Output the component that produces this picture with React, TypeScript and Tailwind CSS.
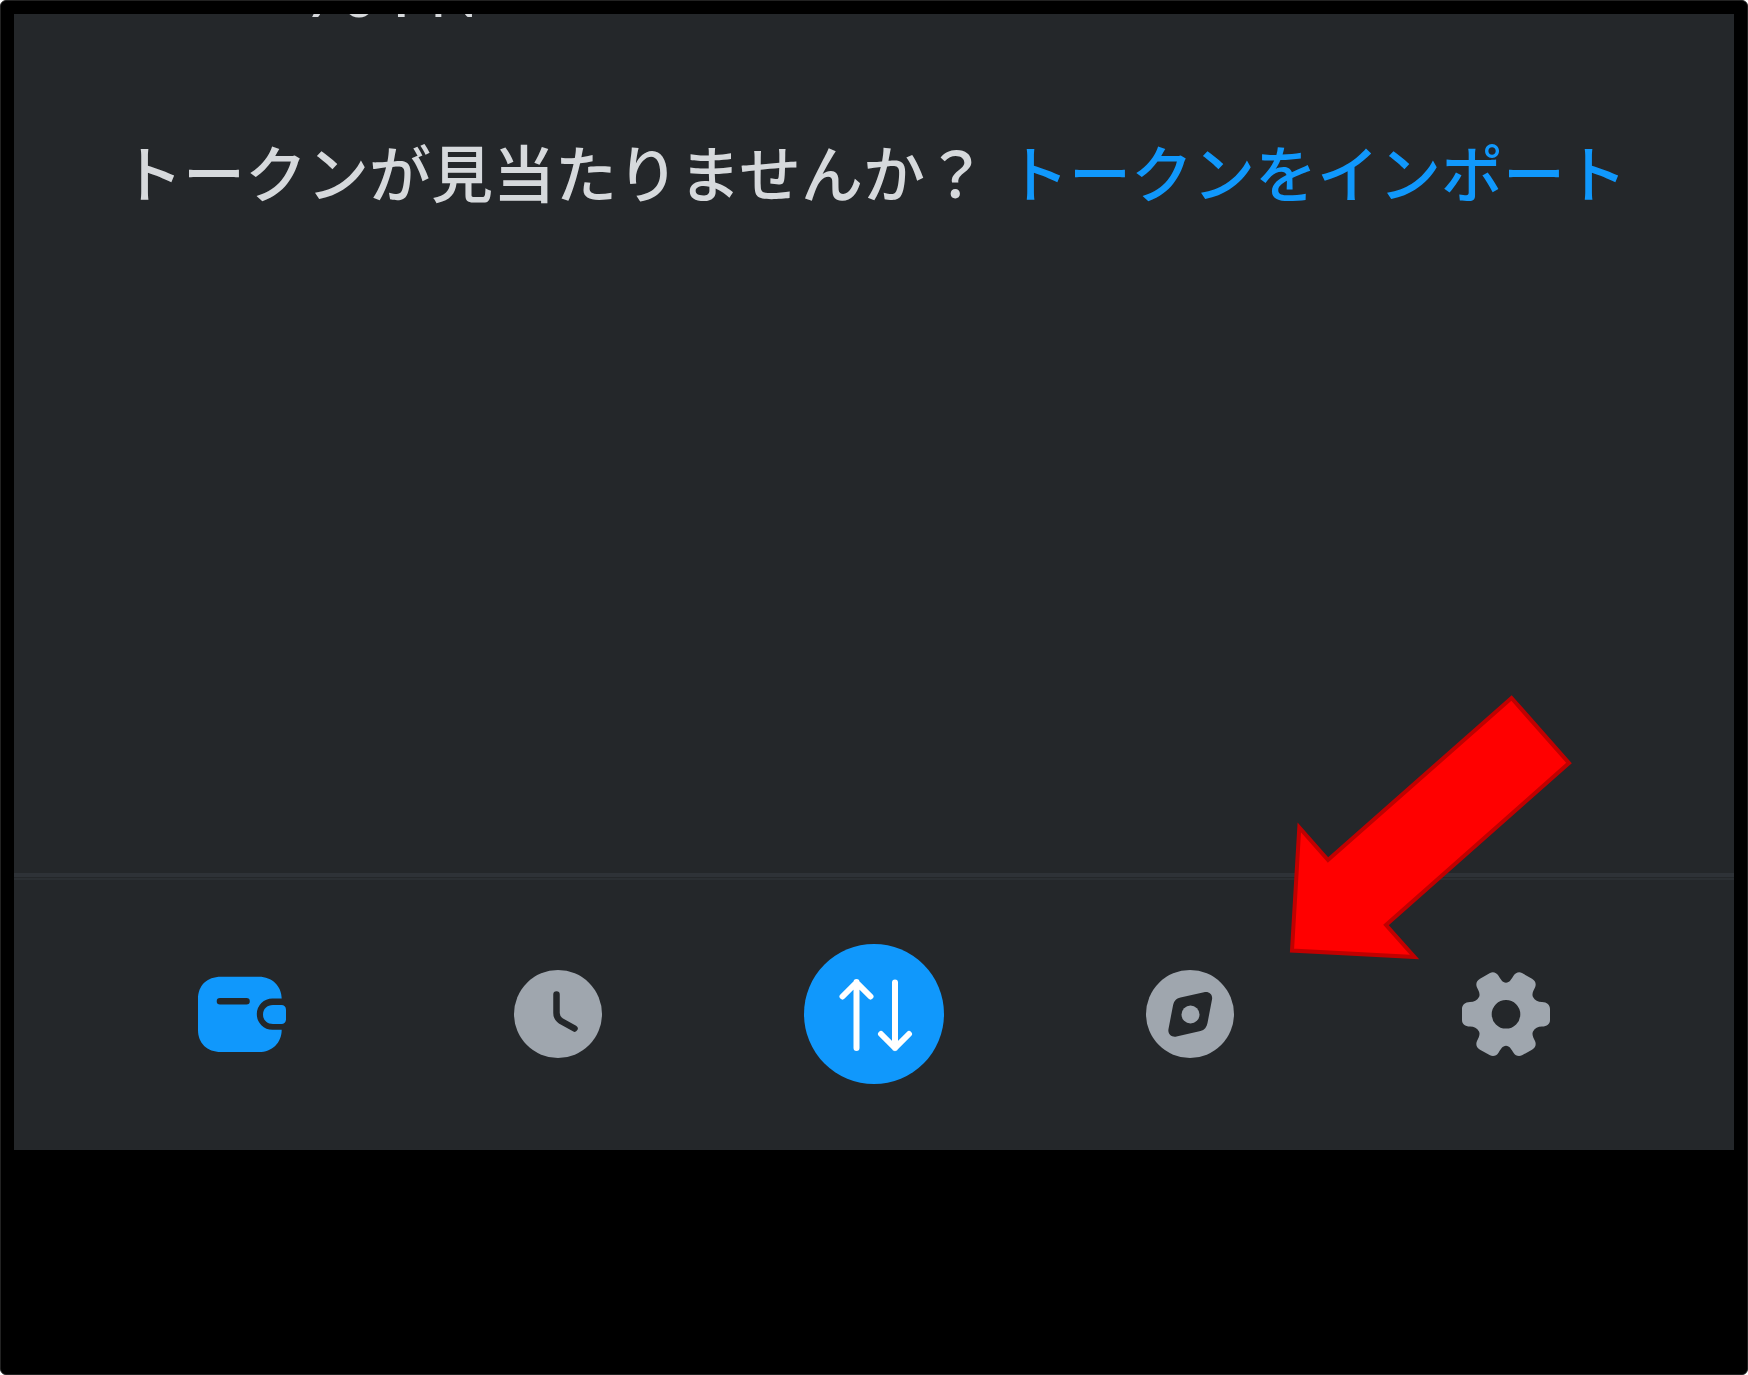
import React from 'react';

interface IconProps {
  className?: string;
}

interface NavItem {
  label: string;
  icon: React.ComponentType<IconProps>;
  color: string;
  size: string;
  active?: boolean;
  highlighted?: boolean;
}

function WalletIcon({ className = '' }: IconProps) {
  return (
    <svg viewBox="0 0 88 88" fill="currentColor" className={className} aria-hidden="true">
      <path
        fillRule="evenodd"
        d="M23 6.7H61C74 6.7 83.7 16 83.7 28.5H74.4A15.6 15.6 0 0 0 74.4 59.7H83.7C83.7 73 74 82 61 82H23C9 82 0 73 0 60V29C0 15.500 9 6.700 23 6.700ZM22 28A3.300 3.300 0 0 0 22 34.600H48.500A3.300 3.300 0 0 0 48.500 28Z"
      />
      <path d="M75 35H83.500A4.500 4.500 0 0 1 88 39.500V49.500A4.500 4.500 0 0 1 83.500 54H75C69 54 65 50 65 44.500S69 35 75 35Z" />
    </svg>
  );
}

function ClockIcon({ className = '' }: IconProps) {
  return (
    <svg viewBox="0 0 88 88" fill="none" className={className} aria-hidden="true">
      <circle cx="44" cy="44" r="44" fill="currentColor" />
      <path
        d="M42.500 24.500V43C42.500 47 44 49 47 51L60.500 58.500"
        stroke="#24272a"
        strokeWidth="6.500"
        strokeLinecap="round"
      />
    </svg>
  );
}

function SwapIcon({ className = '' }: IconProps) {
  return (
    <svg viewBox="0 0 140 140" fill="none" className={className} aria-hidden="true">
      <circle cx="70" cy="70" r="70" fill="currentColor" />
      <path
        d="M52.500 104V38M38.500 52.500L52.500 38.500L66.500 52.500M91 38.500V104M77 90L91 104L105 90"
        stroke="#fff"
        strokeWidth="6"
        strokeLinecap="round"
        strokeLinejoin="round"
      />
    </svg>
  );
}

function CompassIcon({ className = '' }: IconProps) {
  return (
    <svg viewBox="0 0 88 88" fill="none" className={className} aria-hidden="true">
      <circle cx="44" cy="44" r="44" fill="currentColor" />
      <path
        fill="#24272a"
        d="M34.500 27.500L58 22.200C63 21 67 24.500 66 29.500L61.500 53C60.800 57 58.500 60 54.500 61L30.500 66.500C25.500 67.500 21.500 64 22.500 59L27 35.500C28 31 30 28.600 34.500 27.500Z"
      />
      <circle cx="44.500" cy="44.500" r="9" fill="currentColor" />
    </svg>
  );
}

function GearIcon({ className = '' }: IconProps) {
  return (
    <svg viewBox="0 0 88 88" fill="currentColor" className={className} aria-hidden="true">
      <path
        fillRule="evenodd"
        d="M44 12.800C47.500 12.800 49.500 9 51.500 5.800C53.500 2.500 57 1.500 60 3L70 8.800C73.500 10.800 74.500 14 73 17.500C71.500 20.500 69.500 24 71 27C72.800 30.300 76 32 80 32C85 32 88 35 88 39V50C88 54 85 56.500 80 56.500C76 56.500 72.800 58.200 71 61.500C69.500 64.500 71.500 68 73 71C74.500 74.500 73.500 77.700 70 79.700L60 85.300C57 86.800 53.500 86 51.500 82.700C49.500 79.500 47.500 75.700 44 75.700S38.500 79.500 36.500 82.700C34.500 86 31 86.800 28 85.300L18 79.700C14.500 77.700 13.500 74.500 15 71C16.500 68 18.500 64.500 17 61.500C15.200 58.200 12 56.500 8 56.500C3 56.500 0 54 0 50V39C0 35 3 32 8 32C12 32 15.200 30.300 17 27C18.500 24 16.500 20.500 15 17.500C13.500 14 14.500 10.800 18 8.800L28 3C31 1.500 34.500 2.500 36.500 5.800C38.500 9 40.500 12.800 44 12.800ZM44 30A14.300 14.300 0 1 0 44 58.600A14.300 14.300 0 1 0 44 30Z"
      />
    </svg>
  );
}

function PointerArrow({ className = '' }: IconProps) {
  return (
    <svg viewBox="0 0 300 280" className={className} aria-hidden="true">
      <path
        d="M12 261.500L19.300 138.500L48 171L231.500 9L289 74L106 236L134.500 268Z"
        fill="#ff0000"
        stroke="#c00000"
        strokeWidth="4"
        strokeMiterlimit="10"
      />
    </svg>
  );
}

const navItems: NavItem[] = [
  { label: 'ウォレット', icon: WalletIcon, color: 'text-[#1098fc]', size: 'size-[88px]', active: true },
  { label: 'アクティビティ', icon: ClockIcon, color: 'text-[#9fa6ae]', size: 'size-[88px]' },
  { label: 'スワップ', icon: SwapIcon, color: 'text-[#1098fc]', size: 'size-[140px]' },
  { label: 'ブラウザ', icon: CompassIcon, color: 'text-[#9fa6ae]', size: 'size-[88px]', highlighted: true },
  { label: '設定', icon: GearIcon, color: 'text-[#9fa6ae]', size: 'size-[88px]' },
];

function BottomNav() {
  return (
    <nav className="border-t-4 border-[#2e3237]">
      <div className="mt-px border-t-2 border-[#2b2f33] px-[70px] pt-16 pb-[66px]">
        <ul className="grid grid-cols-5">
          {navItems.map(({ label, icon: Icon, color, size, active, highlighted }) => (
            <li key={label} className="relative flex h-[140px] items-center justify-center">
              <button
                type="button"
                aria-label={label}
                aria-current={active ? 'page' : undefined}
                className={`rounded-full ${color}`}
              >
                <Icon className={size} />
              </button>
              {highlighted && (
                <PointerArrow className="pointer-events-none absolute bottom-[115px] left-1/2 ml-[90px] h-[280px] w-[300px] max-w-none" />
              )}
            </li>
          ))}
        </ul>
      </div>
    </nav>
  );
}

export default function App() {
  return (
    <div className="bg-white font-['Noto_Sans_CJK_JP',sans-serif]">
      <div className="flex min-h-screen flex-col rounded-md border border-[#222] bg-black px-[13px] pt-[13px] pb-56">
        <div className="flex flex-1 flex-col bg-[#24272a]">
          <main className="flex-1">
            {/* last line of the token list, mostly scrolled out of view */}
            <div className="h-8 overflow-hidden pl-[291px]">
              <p className="-mt-[61px] font-['Lato',sans-serif] text-[62px] leading-[80px] font-medium text-[#d6d9dc]">
                70 PN
              </p>
            </div>
            <p className="mt-20 flex justify-center gap-5 text-[62px] leading-[90px] font-medium whitespace-nowrap text-[#d6d9dc]">
              <span>トークンが見当たりませんか？</span>
              <a href="#import" className="text-[#1098fc]">
                トークンをインポート
              </a>
            </p>
          </main>
          <BottomNav />
        </div>
      </div>
    </div>
  );
}
